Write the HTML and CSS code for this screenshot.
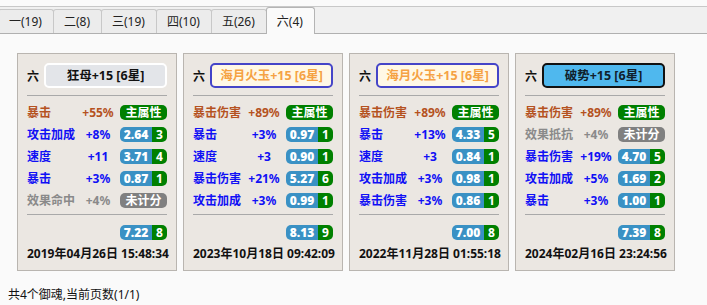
FILE: index.html
```html
<!DOCTYPE html>
<html lang="zh-CN">
<head>
    <meta charset="UTF-8">
    <meta name="viewport" content="width=device-width, initial-scale=1.0">
    <title>御魂</title>
    <link rel="stylesheet" href="styles.css">
</head>
<body>
    <div class="tabbar">
        <div class="tab first">一(19)</div>
        <div class="tab">二(8)</div>
        <div class="tab">三(19)</div>
        <div class="tab">四(10)</div>
        <div class="tab">五(26)</div>
        <div class="tab active">六(4)</div>
    </div>

    <div class="content">
        <div class="cards">
            <div class="card">
                <div class="card-head">
                    <span class="pos">六</span>
                    <div class="name name-gray">狂母+15 [6星]</div>
                </div>
                <div class="rows">
                    <div class="row main"><span>暴击</span><span class="val">+55%</span><span class="badge green">主属性</span></div>
                    <div class="row sub"><span>攻击加成</span><span class="val">+8%</span><span class="score"><b>2.64</b><i>3</i></span></div>
                    <div class="row sub"><span>速度</span><span class="val">+11</span><span class="score"><b>3.71</b><i>4</i></span></div>
                    <div class="row sub"><span>暴击</span><span class="val">+3%</span><span class="score"><b>0.87</b><i>1</i></span></div>
                    <div class="row off"><span>效果命中</span><span class="val">+4%</span><span class="badge gray">未计分</span></div>
                </div>
                <div class="total"><span class="score"><b>7.22</b><i>8</i></span></div>
                <div class="date">2019年04月26日 15:48:34</div>
            </div>

            <div class="card">
                <div class="card-head">
                    <span class="pos">六</span>
                    <div class="name name-gold">海月火玉+15 [6星]</div>
                </div>
                <div class="rows">
                    <div class="row main"><span>暴击伤害</span><span class="val">+89%</span><span class="badge green">主属性</span></div>
                    <div class="row sub"><span>暴击</span><span class="val">+3%</span><span class="score"><b>0.97</b><i>1</i></span></div>
                    <div class="row sub"><span>速度</span><span class="val">+3</span><span class="score"><b>0.90</b><i>1</i></span></div>
                    <div class="row sub"><span>暴击伤害</span><span class="val">+21%</span><span class="score"><b>5.27</b><i>6</i></span></div>
                    <div class="row sub"><span>攻击加成</span><span class="val">+3%</span><span class="score"><b>0.99</b><i>1</i></span></div>
                </div>
                <div class="total"><span class="score"><b>8.13</b><i>9</i></span></div>
                <div class="date">2023年10月18日 09:42:09</div>
            </div>

            <div class="card">
                <div class="card-head">
                    <span class="pos">六</span>
                    <div class="name name-gold">海月火玉+15 [6星]</div>
                </div>
                <div class="rows">
                    <div class="row main"><span>暴击伤害</span><span class="val">+89%</span><span class="badge green">主属性</span></div>
                    <div class="row sub"><span>暴击</span><span class="val">+13%</span><span class="score"><b>4.33</b><i>5</i></span></div>
                    <div class="row sub"><span>速度</span><span class="val">+3</span><span class="score"><b>0.84</b><i>1</i></span></div>
                    <div class="row sub"><span>攻击加成</span><span class="val">+3%</span><span class="score"><b>0.98</b><i>1</i></span></div>
                    <div class="row sub"><span>暴击伤害</span><span class="val">+3%</span><span class="score"><b>0.86</b><i>1</i></span></div>
                </div>
                <div class="total"><span class="score"><b>7.00</b><i>8</i></span></div>
                <div class="date">2022年11月28日 01:55:18</div>
            </div>

            <div class="card">
                <div class="card-head">
                    <span class="pos">六</span>
                    <div class="name name-blue">破势+15 [6星]</div>
                </div>
                <div class="rows">
                    <div class="row main"><span>暴击伤害</span><span class="val">+89%</span><span class="badge green">主属性</span></div>
                    <div class="row off"><span>效果抵抗</span><span class="val">+4%</span><span class="badge gray">未计分</span></div>
                    <div class="row sub"><span>暴击伤害</span><span class="val">+19%</span><span class="score"><b>4.70</b><i>5</i></span></div>
                    <div class="row sub"><span>攻击加成</span><span class="val">+5%</span><span class="score"><b>1.69</b><i>2</i></span></div>
                    <div class="row sub"><span>暴击</span><span class="val">+3%</span><span class="score"><b>1.00</b><i>1</i></span></div>
                </div>
                <div class="total"><span class="score"><b>7.39</b><i>8</i></span></div>
                <div class="date">2024年02月16日 23:24:56</div>
            </div>
        </div>

        <div class="footer">共4个御魂,当前页数(1/1)</div>
    </div>
</body>
</html>
```

FILE: styles.css
```css
body {
    margin: 0;
    padding: 0;
    background: #fafafa;
    color: #111;
    font-family: "Noto Sans", "Noto Sans CJK SC", sans-serif;
    font-size: 12px;
}

.tabbar {
    margin-top: 6px;
    display: flex;
    align-items: flex-end;
    height: 26px;
    background: #f0f0f0;
    border-top: 1px solid #c8c8c8;
    border-bottom: 1px solid #b0b0b0;
}

.tab {
    height: 23px;
    line-height: 23px;
    padding: 0 11px 0 10px;
    margin-right: -1px;
    background: #ececec;
    border: 1px solid #c8c8c8;
    border-bottom: none;
    border-radius: 3px 3px 0 0;
    color: #222;
}

.tab.first {
    margin-left: -2px;
}

.tab.active {
    height: 26px;
    line-height: 28px;
    margin-bottom: -1px;
    background: #fafafa;
    border-color: #b4b4b4;
}

.content {
    padding-top: 19px;
}

.cards {
    display: flex;
    gap: 6px;
    padding-left: 17px;
}

.card {
    width: 160px;
    box-sizing: border-box;
    background: #ebe7e2;
    border: 1px solid #b9b5b0;
    padding: 9px 9px 8px;
}

.card-head {
    display: flex;
    align-items: center;
    height: 25px;
}

.pos {
    font-weight: bold;
    width: 17px;
}

.name {
    flex: 1;
    box-sizing: border-box;
    height: 25px;
    line-height: 21px;
    border: 2px solid #fff;
    border-radius: 5px;
    text-align: center;
    font-weight: bold;
    font-size: 12.5px;
}

.name-gray {
    background: #e3e5e9;
    color: #111;
}

.name-gold {
    background: #fff8e6;
    border-color: #4545c8;
    color: #f5a243;
}

.name-blue {
    background: #4fb8ee;
    border-color: #111;
    color: #10202c;
}

.rows {
    margin-top: 7px;
    border-top: 1px solid #a9a9a9;
    padding: 5px 0 3px;
    border-bottom: 1px solid #a9a9a9;
}

.row {
    display: grid;
    grid-template-columns: 49px 36px 47px;
    column-gap: 4px;
    align-items: center;
    height: 22px;
    font-weight: bold;
}

.row .val {
    text-align: center;
}

.row.main {
    color: #b5521f;
}

.row.sub {
    color: #1010f5;
}

.row.off {
    color: #8a8a8a;
}

.badge {
    height: 15px;
    line-height: 15px;
    border-radius: 5px;
    color: #fff;
    text-align: center;
    font-weight: bold;
}

.green {
    background: #008000;
}

.gray {
    background: #808080;
}

.score {
    display: flex;
    width: 47px;
    height: 15px;
    line-height: 15px;
    color: #fff;
    font-weight: bold;
}

.score b {
    width: 32px;
    background: #3a91c4;
    border-radius: 5px 0 0 5px;
    text-align: center;
}

.score i {
    flex: 1;
    font-style: normal;
    background: #008000;
    border-radius: 0 5px 5px 0;
    text-align: center;
}

.total {
    display: flex;
    justify-content: flex-end;
    align-items: center;
    height: 22px;
    margin-top: 6px;
}

.date {
    margin-top: 3px;
    line-height: 16px;
    font-weight: bold;
    white-space: nowrap;
}

.footer {
    padding: 16px 0 0 8px;
    line-height: 16px;
    color: #111;
}
```
